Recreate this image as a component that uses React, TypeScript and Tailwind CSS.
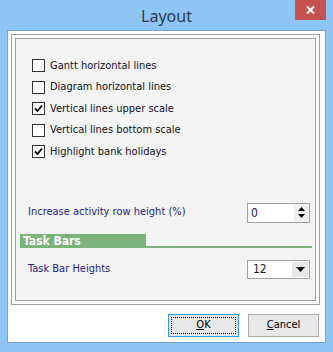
const options = [
  { label: "Gantt horizontal lines", checked: false },
  { label: "Diagram horizontal lines", checked: false },
  { label: "Vertical lines upper scale", checked: true },
  { label: "Vertical lines bottom scale", checked: false },
  { label: "Highlight bank holidays", checked: true },
];

function CheckBox({ checked }: { checked: boolean }) {
  return (
    <div className="flex h-[13px] w-[13px] items-center justify-center border border-[#333333] bg-white">
      {checked && (
        <svg width="9" height="9" viewBox="0 0 9 9">
          <path d="M1 4.5 L3.5 7 L8 1.5" fill="none" stroke="#000" strokeWidth="1.8" />
        </svg>
      )}
    </div>
  );
}

function Arrow({ up }: { up?: boolean }) {
  return (
    <svg width="7" height="4" viewBox="0 0 7 4">
      <path d={up ? "M0 4 L3.5 0 L7 4 Z" : "M0 0 L7 0 L3.5 4 Z"} fill="#000" />
    </svg>
  );
}

export default function App() {
  return (
    <div
      className="flex h-[352px] w-[333px] flex-col bg-[#8cc5f6] text-[11px]"
      style={{ fontFamily: "'DejaVu Sans Condensed', 'Liberation Sans', sans-serif" }}
    >
      {/* Title bar */}
      <div className="relative flex h-[30px] items-center justify-center">
        <span className="pt-[1px] text-[16px] text-[#2d3a4c]" style={{ fontFamily: "'Noto Sans', 'Open Sans', sans-serif" }}>
          Layout
        </span>
        <div className="absolute right-[7px] top-0 flex h-[20px] w-[31px] items-center justify-center bg-[#c75050]">
          <svg width="9" height="8" viewBox="0 0 9 8">
            <path d="M1 0.5 L8 7.5 M8 0.5 L1 7.5" stroke="#fff" strokeWidth="2" />
          </svg>
        </div>
      </div>

      {/* Client area */}
      <div className="mx-[7px] mb-[9px] flex flex-1 flex-col border border-[#6fa3d4] bg-white pl-[3px] pr-[5px] pt-[3px]">
        <div className="flex h-[271px] flex-col border border-[#a0a0a0] bg-[#fafafa] p-[3px]">
          <div className="flex flex-1 flex-col border border-[#a0a0a0] bg-[#f4f4f4]">
            {/* check options */}
            <div className="flex flex-col pl-[16px] pt-[16px]">
              {options.map((o) => (
                <div key={o.label} className="flex h-[21.5px] items-center gap-[5px] text-[#111122]">
                  <CheckBox checked={o.checked} />
                  <span>{o.label}</span>
                </div>
              ))}
            </div>

            {/* row height */}
            <div className="mt-[40px] flex items-center justify-between pl-[12px] pr-[5px]">
              <span className="text-[#1e1e8c]">Increase activity row height (%)</span>
              <div className="flex h-[20px] w-[63px] items-center border border-[#a0a0a0] bg-white">
                <span className="flex-1 pl-[3px] text-[12px] text-[#1a1a5a]">0</span>
                <div className="mr-[1px] flex h-full w-[14px] flex-col items-center justify-center gap-[3px] bg-[#f0f0f0]">
                  <Arrow up />
                  <Arrow />
                </div>
              </div>
            </div>

            {/* section header */}
            <div className="mt-[11px] flex items-end pl-[4px] pr-[3px]">
              <div className="flex h-[14px] w-[126px] items-center bg-[#7bb37b] pl-[3px] text-[12px] font-bold text-white">
                Task Bars
              </div>
              <div className="h-[2px] flex-1 bg-[#7bb37b]" />
            </div>

            {/* task bar heights */}
            <div className="mt-[12px] flex items-center justify-between pl-[12px] pr-[5px]">
              <span className="text-[#1e1e8c]">Task Bar Heights</span>
              <div className="flex h-[19px] w-[63px] items-center border border-[#a0a0a0] bg-white">
                <span className="flex-1 pl-[5px] text-[12px] text-[#1a1a2e]">12</span>
                <div className="mr-[1px] flex h-[15px] w-[16px] items-center justify-center bg-[#e8e8e8]">
                  <svg width="9" height="5" viewBox="0 0 9 5">
                    <path d="M0 0 L9 0 L4.5 5 Z" fill="#000" />
                  </svg>
                </div>
              </div>
            </div>
          </div>
        </div>

        {/* buttons */}
        <div className="mt-[9px] flex justify-end gap-[9px] pr-[1px]">
          <button className="flex h-[23px] w-[71px] items-center justify-center border border-[#3399ff] bg-[#e8e8e8] p-[2px] text-[#000]">
            <span className="flex h-full w-full items-center justify-center border border-dotted border-[#000]">
              <span className="underline">O</span>K
            </span>
          </button>
          <button className="flex h-[23px] w-[71px] items-center justify-center border border-[#acacac] bg-[#e8e8e8] text-[#000]">
            <span className="underline">C</span>ancel
          </button>
        </div>
      </div>
    </div>
  );
}
